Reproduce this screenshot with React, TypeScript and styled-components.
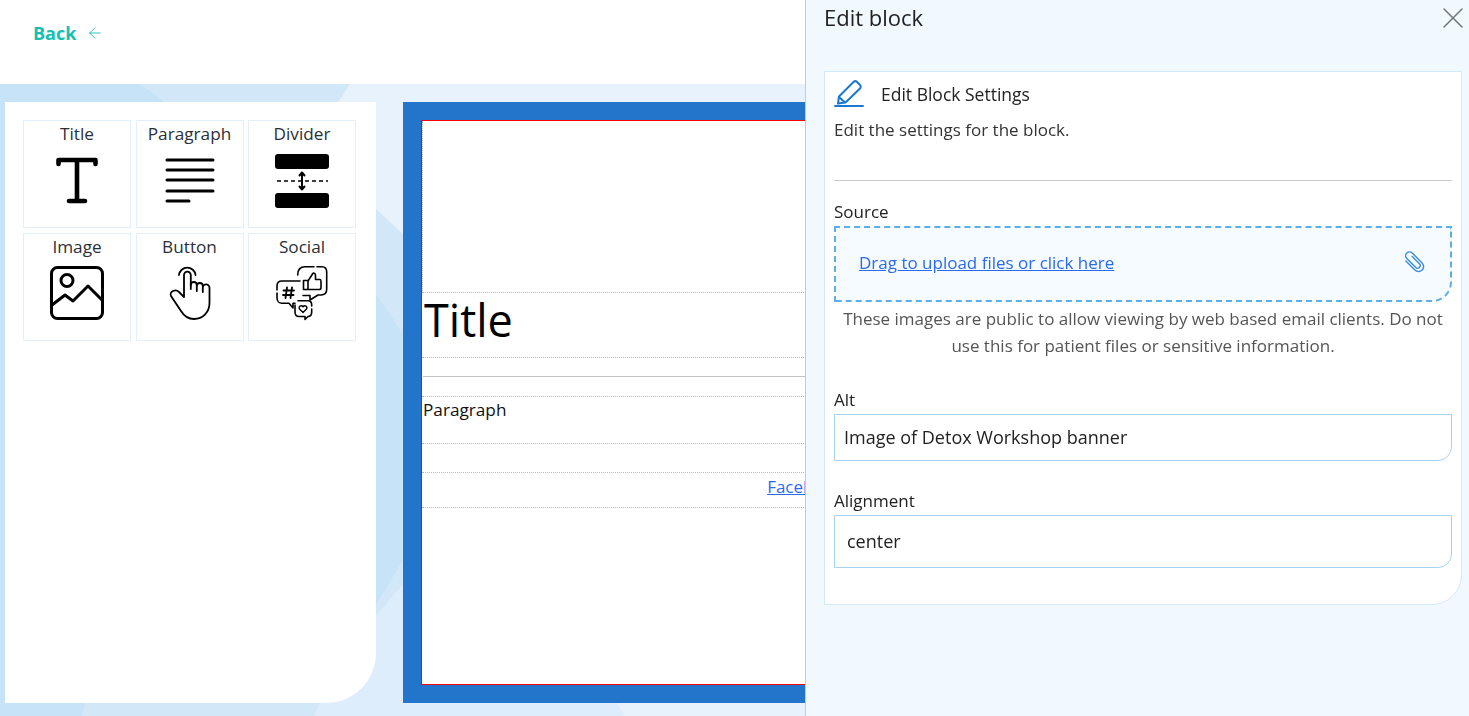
import React from 'react';
import styled, { createGlobalStyle } from 'styled-components';
import { ArrowLeft, X } from 'lucide-react';

const GlobalStyle = createGlobalStyle`
  html, body {
    margin: 0;
    height: 100%;
    overflow: hidden;
    font-family: "Open Sans", "Liberation Sans", sans-serif;
    color: #222;
  }
  * { box-sizing: border-box; }
`;

const Page = styled.div`
  width: 1469px;
  height: 716px;
  display: flex;
  flex-direction: column;
  overflow: hidden;
  background: #fff;
`;

const Header = styled.header`
  height: 84px;
  flex: none;
  display: flex;
  align-items: flex-start;
  padding: 21px 0 0 33px;
`;

const BackLink = styled.a`
  display: flex;
  align-items: center;
  gap: 10px;
  font-size: 18px;
  line-height: 24px;
  font-weight: 700;
  color: #17bfb3;
`;

// the pale polygons behind the panels
const Workspace = styled.main`
  position: relative;
  isolation: isolate;
  flex: 1;
  display: flex;
  align-items: stretch;
  gap: 27px;
  padding: 18px 0 13px 5px;
  background: linear-gradient(62deg, #deedfb 0 34.6%, #e7f2fc 34.6%);

  &::before,
  &::after {
    content: '';
    position: absolute;
    inset: 0;
    z-index: -1;
  }
  &::before {
    background: #d2e8f9;
    clip-path: polygon(0 0, 350px 0, 338px 18px, 376px 125px, 403px 150px, 403px 500px, 376px 532px, 320px 619px, 314px 632px, 0 632px);
  }
  &::after {
    background: #c6e3f8;
    clip-path: polygon(0 0, 140px 0, 165px 18px, 376px 210px, 403px 250px, 403px 476px, 376px 521px, 85px 619px, 82px 632px, 0 632px);
  }
`;

const Palette = styled.aside`
  width: 371px;
  flex: none;
  padding: 18px;
  background: #fff;
  border-bottom-right-radius: 50px;
`;

const TileGrid = styled.div`
  display: grid;
  grid-template-columns: repeat(3, 108px);
  grid-auto-rows: 108px;
  column-gap: 4.5px;
  row-gap: 5px;
`;

const Tile = styled.div`
  display: flex;
  flex-direction: column;
  align-items: center;
  border: 1px solid #e3f0fb;
`;

const TileLabel = styled.span`
  font-size: 17.2px;
  line-height: 26px;
  color: #2b3038;
`;

const TileIcon = styled.svg`
  width: 60px;
  height: 60px;
  margin-top: 3px;
  fill: none;
  stroke: #000;
  stroke-linecap: round;
  stroke-linejoin: round;
`;

const Canvas = styled.section`
  width: 804px;
  flex: none;
  border: 18px solid #2374cb;
  background: #fff;
`;

const Sheet = styled.div`
  height: 100%;
  background: #fff;
  border: 1px solid #f00;
`;

const Block = styled.div<{ $height: number; $align?: string; $first?: boolean }>`
  height: ${(p) => p.$height}px;
  display: flex;
  align-items: center;
  justify-content: ${(p) => p.$align || 'flex-start'};
  padding: 0 1px;
  border-bottom: 1px dotted #b9b9b9;
  border-left: ${(p) => (p.$first ? '1px dotted #b9b9b9' : 'none')};
`;

const BlockTitle = styled.h1`
  margin: 0 0 12px 1px;
  font-size: 45px;
  font-weight: 400;
  color: #000;
`;

const BlockParagraph = styled.p`
  margin: 0;
  align-self: flex-start;
  padding-top: 1px;
  font-size: 17.2px;
  line-height: 24px;
  color: #111;
`;

const BlockRule = styled.hr`
  width: 100%;
  margin: 0 0 1px;
  border: none;
  border-top: 1px solid #c4c4c4;
`;

const SocialLink = styled.a`
  margin-bottom: 8px;
  font-size: 17px;
  color: #2a6af0;
  text-decoration: underline;
`;

const Drawer = styled.aside`
  position: fixed;
  top: 0;
  right: 0;
  bottom: 0;
  width: 664px;
  padding: 0 7px 0 18px;
  background: #f2f9fe;
  border-left: 1px solid #c5cbd1;
`;

const DrawerHead = styled.div`
  height: 71px;
  display: flex;
  justify-content: space-between;
  align-items: flex-start;
`;

const DrawerTitle = styled.h2`
  margin: 0;
  font-size: 22px;
  line-height: 34px;
  font-weight: 400;
  color: #222;
`;

const CloseButton = styled.button`
  display: flex;
  margin: 0 -9px 0 0;
  padding: 0;
  border: none;
  background: none;
  color: #6f7478;
`;

const Card = styled.div`
  height: 534px;
  padding: 7px 9px 0;
  background: #fff;
  border: 1px solid #d3e8f8;
  border-bottom-right-radius: 30px;
`;

const CardHeading = styled.div`
  display: flex;
  align-items: center;
  gap: 17px;
  height: 30px;
`;

const PencilIcon = styled.svg`
  width: 30px;
  height: 30px;
  fill: none;
  stroke: #1b78d0;
  stroke-width: 2;
  stroke-linejoin: round;
  stroke-linecap: round;
`;

const HeadingText = styled.span`
  font-size: 17.5px;
  color: #222;
`;

const Intro = styled.p`
  margin: 8px 0 0;
  font-size: 17px;
  line-height: 26px;
  color: #333;
`;

const Rule = styled.hr`
  margin: 37px 0 19px;
  border: none;
  border-top: 1px solid #c9c9c9;
`;

const FieldLabel = styled.label`
  display: block;
  padding-bottom: 2px;
  font-size: 17px;
  line-height: 24px;
  color: #222;
`;

const DropZone = styled.div`
  height: 76px;
  display: flex;
  align-items: center;
  justify-content: space-between;
  padding: 0 22px 4px 23px;
  background: #f5fbff;
  border: 2px dashed #5eaee5;
  border-bottom-right-radius: 20px;
`;

const DropLink = styled.a`
  font-size: 17px;
  color: #2a6af0;
  text-decoration: underline;
`;

const ClipIcon = styled.svg`
  width: 28px;
  height: 28px;
  fill: none;
  stroke: #3f8fd8;
  stroke-width: 1.15;
  stroke-linecap: round;
`;

const HelpText = styled.p`
  margin: 3px 0 29px;
  font-size: 17px;
  line-height: 27px;
  text-align: center;
  color: #555;
`;

const TextInput = styled.input`
  display: block;
  width: 100%;
  height: 47px;
  margin: 0 0 28px;
  padding: 0 9px 2px;
  font: inherit;
  font-size: 18px;
  color: #222;
  background: #fff;
  border: 1px solid #a8d2f0;
  border-radius: 0 0 14px 0;
  outline: none;
`;

const SelectInput = styled.select`
  display: block;
  width: 100%;
  height: 53px;
  padding: 0 12px 2px;
  font: inherit;
  font-size: 18px;
  color: #222;
  background: #fff;
  border: 1px solid #a8d2f0;
  border-radius: 0 0 14px 0;
  outline: none;
  appearance: none;
`;

const TitleGlyph = () => (
  <TileIcon viewBox="0 0 60 60" strokeWidth={4.6}>
    <path d="M11.500 14 V10 H48.500 V14 M30 10 V51 M22 51 H38" />
  </TileIcon>
);

const ParagraphGlyph = () => (
  <TileIcon viewBox="0 0 60 60" strokeWidth={3}>
    <path d="M7 10 H53 M7 20 H53 M7 30 H53 M7 41 H53 M7 51 H29" />
  </TileIcon>
);

const DividerGlyph = () => (
  <TileIcon viewBox="0 0 60 60" strokeWidth={2}>
    <rect x="3" y="4" width="54" height="15" rx="3" fill="#000" stroke="none" />
    <rect x="3" y="43" width="54" height="15" rx="3" fill="#000" stroke="none" />
    <path d="M5 31 H56" strokeDasharray="4 3" strokeLinecap="butt" strokeWidth={1.6} />
    <path d="M30 23.500 V38.500 M27.500 25.500 L30 22.500 L32.500 25.500 M27.500 36.500 L30 39.500 L32.500 36.500" />
  </TileIcon>
);

const ImageGlyph = () => (
  <TileIcon viewBox="0 0 60 60" strokeWidth={3}>
    <rect x="4.500" y="4.500" width="51" height="51" rx="6" />
    <circle cx="20" cy="17.500" r="6" />
    <path d="M5 42 L18 32 L26 38 L41 23 L55 37" />
  </TileIcon>
);

const ButtonGlyph = () => (
  <TileIcon viewBox="0 0 60 60" strokeWidth={1.8}>
    <path d="M19 12 A8.300 8.300 0 0 1 35.500 12" />
    <path d="M24 33 V12 A3.400 3.400 0 0 1 30.800 12 V26" />
    <path d="M30.800 22 A3 3 0 0 1 36.800 22 V28 M36.800 23 A3 3 0 0 1 42.800 23 V29 M42.800 24.500 A3.300 3.300 0 0 1 49.500 25 V40 C49.500 49 43 56 34 56 C28 56 24 53 21 48 L11 33 C10 31 11 29 13 28 C15 27 17 27 19 29 L24 34" />
  </TileIcon>
);

const SocialGlyph = () => (
  <TileIcon viewBox="0 0 60 60" strokeWidth={1.6}>
    <path d="M25.700 12 C25.700 6 28 3.700 33 3.700 H42 M45 3.700 H50 C53 3.700 54.700 6 54.700 9 V26 C54.700 30 52.500 32 49 32 H46 L38 37 V32.500 H31" />
    <path d="M31.500 17.500 H36 V26.500 H31.500 Z M36 18 L40.500 11 C41 9.500 43.500 10 43.500 12.500 V16.500 H48 C49 16.500 49 17.500 49 18.500 V25 C49 26 48.500 26.500 47 26.500 H36" />
    <path d="M28 18 H10 C7 18 5 20 5 23 V27 M5 30 V35 C5 38 7 40.300 10 40.300 H17 L21 45 V40.300 H23" />
    <path d="M15 24.500 L13.500 35 M20 24.500 L18.500 35 M11.500 27.500 H22 M11 32 H21.500" strokeWidth={1.8} />
    <path d="M26 37.700 H36 C38.500 37.700 39.700 39.500 39.700 42 V43 M39.700 46 V49 C39.700 52 38 53.500 36 53.500 H36 L33 56.500 V53.500 H27 C24.500 53.500 23 52 23 49 V42" />
    <path d="M31 49.500 L27.500 46 C26 43.500 29.500 41.500 31 43.800 C32.500 41.500 36 43.500 34.500 46 Z" strokeWidth={1.4} />
  </TileIcon>
);

const tiles = [
  { label: 'Title', Glyph: TitleGlyph },
  { label: 'Paragraph', Glyph: ParagraphGlyph },
  { label: 'Divider', Glyph: DividerGlyph },
  { label: 'Image', Glyph: ImageGlyph },
  { label: 'Button', Glyph: ButtonGlyph },
  { label: 'Social', Glyph: SocialGlyph },
];

const App: React.FC = () => {
  return (
    <Page>
      <GlobalStyle />
      <Header>
        <BackLink>
          Back
          <ArrowLeft size={18} strokeWidth={1.2} />
        </BackLink>
      </Header>
      <Workspace>
        <Palette>
          <TileGrid>
            {tiles.map(({ label, Glyph }) => (
              <Tile key={label}>
                <TileLabel>{label}</TileLabel>
                <Glyph />
              </Tile>
            ))}
          </TileGrid>
        </Palette>
        <Canvas>
          <Sheet>
            <Block $height={172} $first />
            <Block $height={65}>
              <BlockTitle>Title</BlockTitle>
            </Block>
            <Block $height={39}>
              <BlockRule />
            </Block>
            <Block $height={47}>
              <BlockParagraph>Paragraph</BlockParagraph>
            </Block>
            <Block $height={29} />
            <Block $height={35} $align="center">
              <SocialLink>Facebook</SocialLink>
            </Block>
          </Sheet>
        </Canvas>
      </Workspace>
      <Drawer>
        <DrawerHead>
          <DrawerTitle>Edit block</DrawerTitle>
          <CloseButton>
            <X size={36} strokeWidth={1} />
          </CloseButton>
        </DrawerHead>
        <Card>
          <CardHeading>
            <PencilIcon viewBox="0 0 30 30">
              <path d="M5 17.500 L19.500 3 C20.500 2 22 2 23 3 L26 6 C27 7 27 8.500 26 9.500 L11.500 23.500 L4 24.500 Z M5 18 L11 23.500" />
              <path d="M1 27 H29" />
            </PencilIcon>
            <HeadingText>Edit Block Settings</HeadingText>
          </CardHeading>
          <Intro>Edit the settings for the block.</Intro>
          <Rule />
          <FieldLabel>Source</FieldLabel>
          <DropZone>
            <DropLink>Drag to upload files or click here</DropLink>
            <ClipIcon viewBox="0 0 22 22">
              <g transform="rotate(-45 11 11)">
                <path d="M7 6 V16 A4 4 0 0 0 15 16 V5 A3 3 0 0 0 9 5 V15 A2 2 0 0 0 13 15 V7" />
              </g>
            </ClipIcon>
          </DropZone>
          <HelpText>
            These images are public to allow viewing by web based email clients. Do not use this for patient files or
            sensitive information.
          </HelpText>
          <FieldLabel>Alt</FieldLabel>
          <TextInput readOnly value="Image of Detox Workshop banner" />
          <FieldLabel>Alignment</FieldLabel>
          <SelectInput defaultValue="center">
            <option value="left">left</option>
            <option value="center">center</option>
            <option value="right">right</option>
          </SelectInput>
        </Card>
      </Drawer>
    </Page>
  );
};

export default App;
